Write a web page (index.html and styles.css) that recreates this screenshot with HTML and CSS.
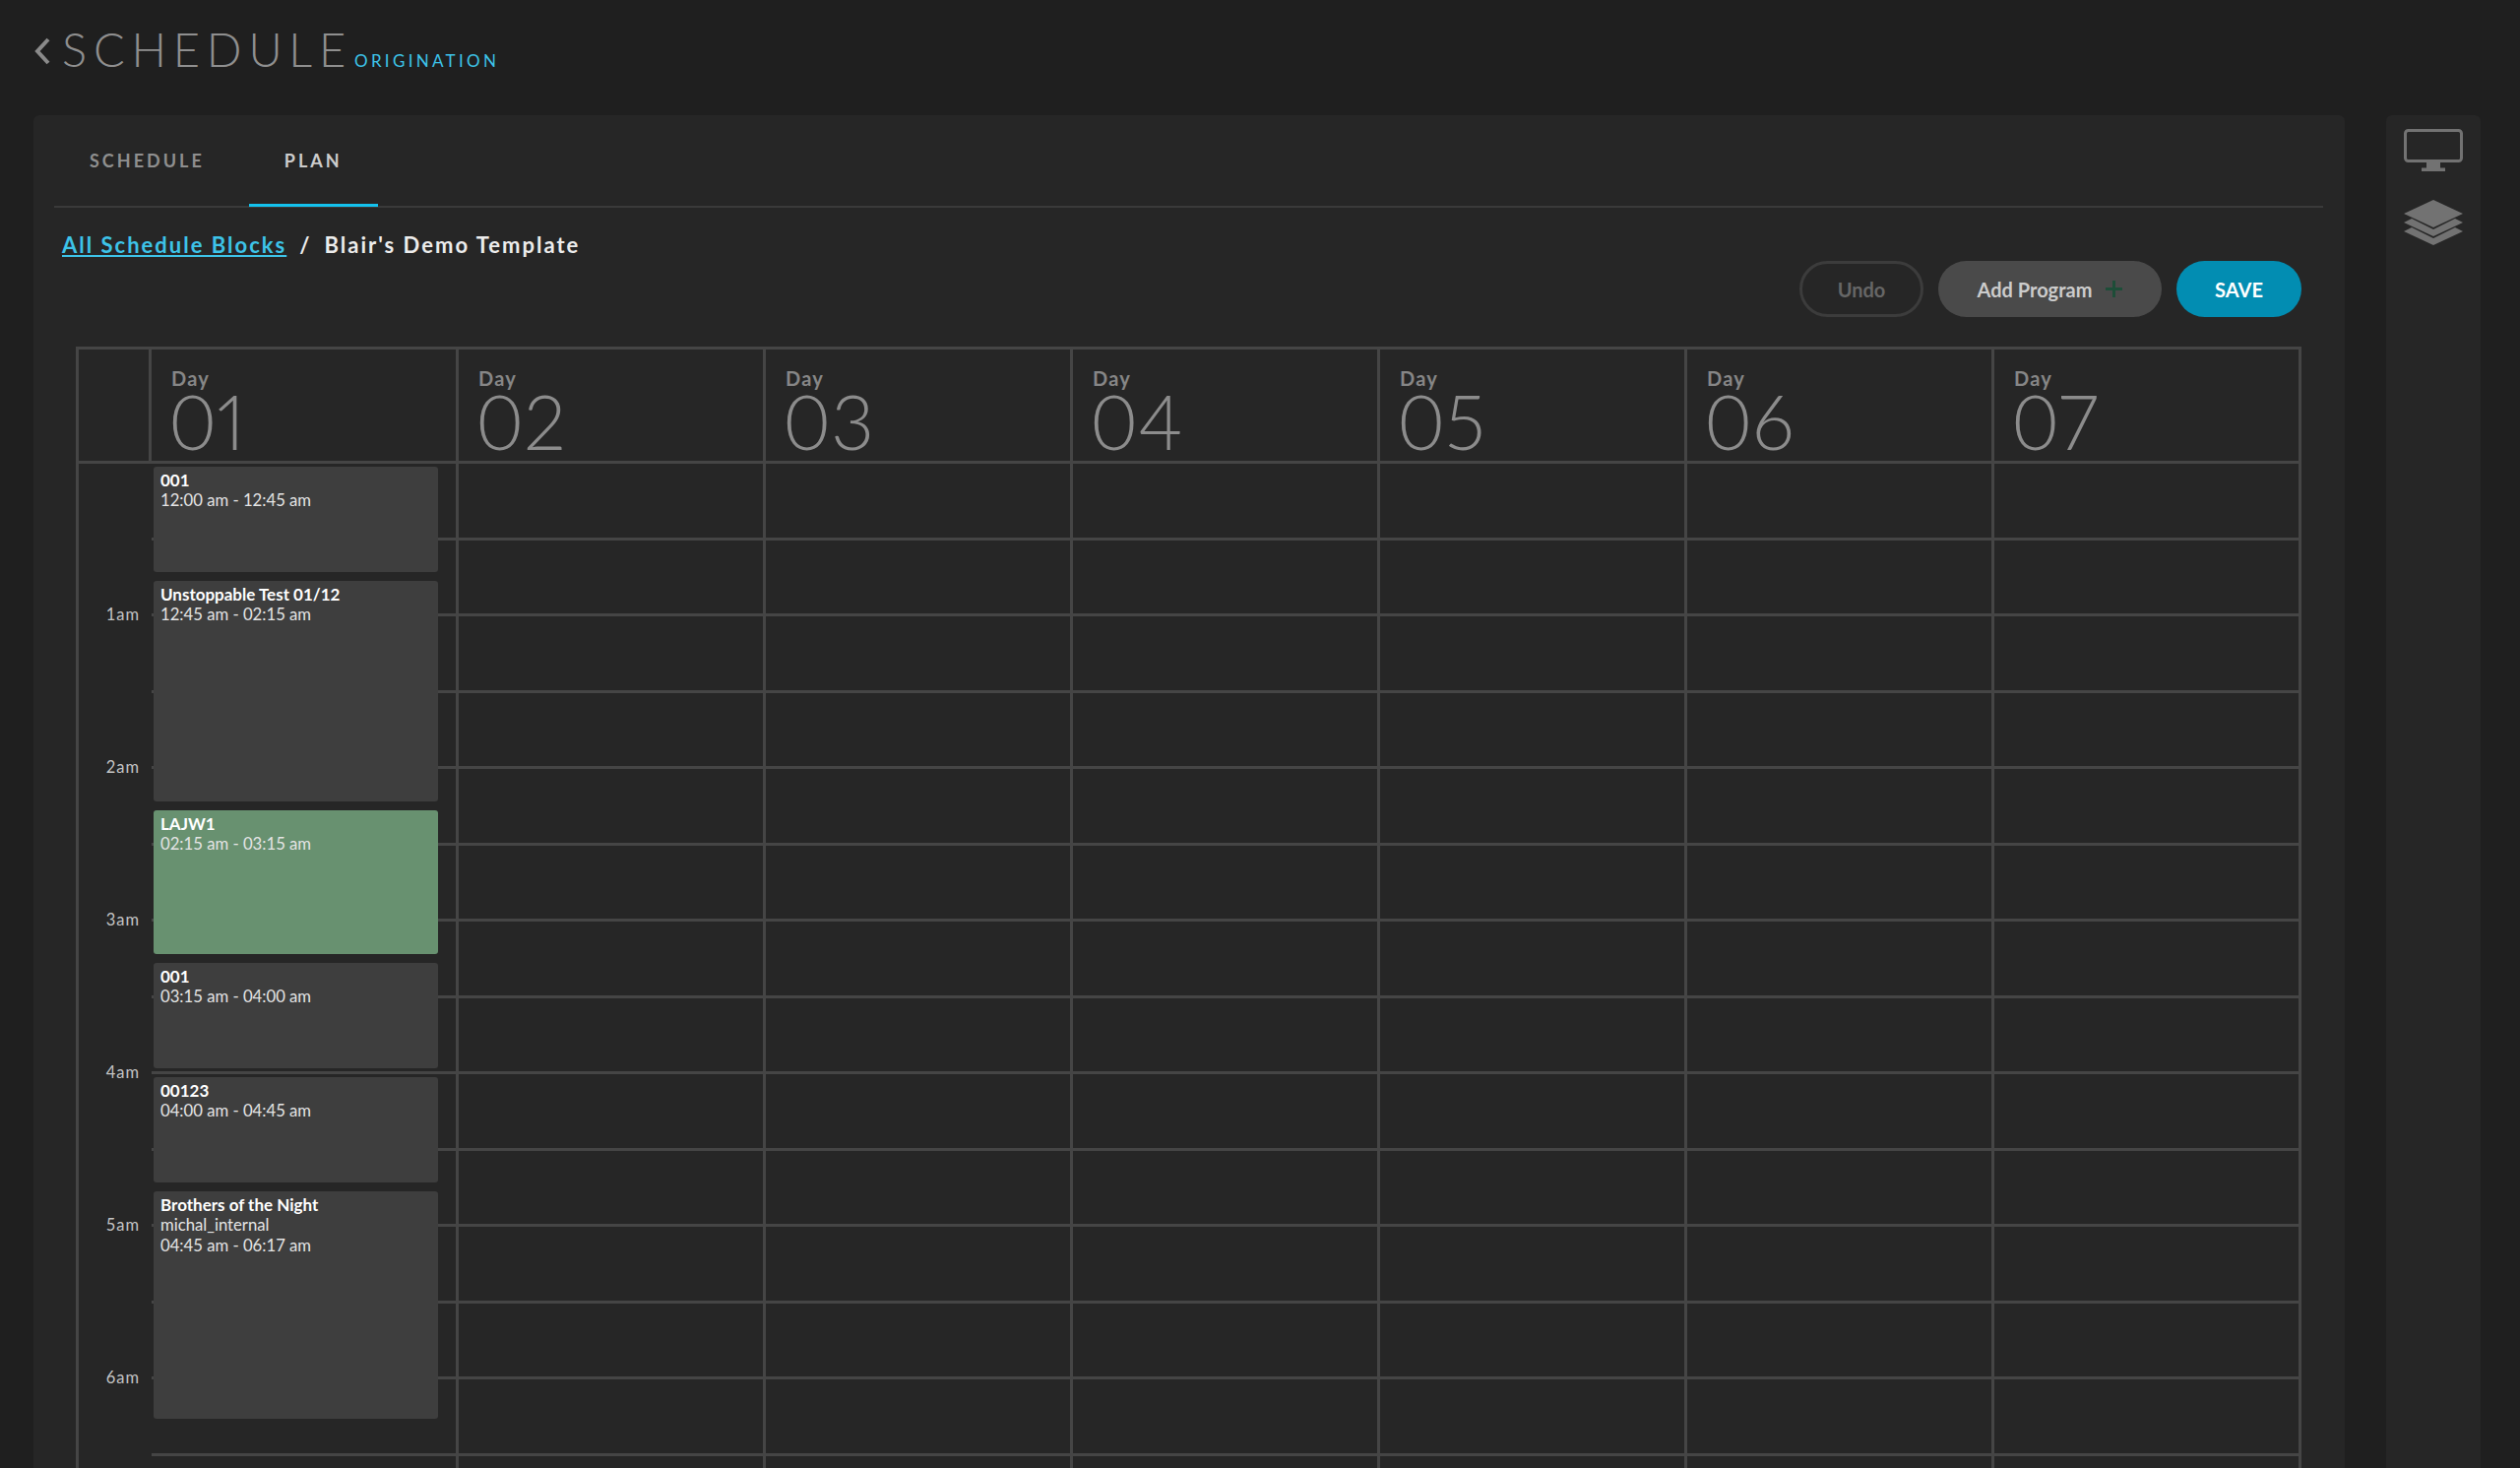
FILE: index.html
```html
<!DOCTYPE html>
<html lang="en">
<head>
    <meta charset="UTF-8">
    <meta name="viewport" content="width=device-width, initial-scale=1.0">
    <title>Schedule Origination</title>
    <link rel="stylesheet" href="styles.css">
</head>
<body>

<div class="page-header">
    <svg class="back-icon" width="18" height="28" viewBox="0 0 18 28"><polyline points="15,2 4,14 15,26" fill="none" stroke="#8a8a8a" stroke-width="4"/></svg>
    <span class="page-title">SCHEDULE</span>
    <span class="page-subtitle">ORIGINATION</span>
</div>

<div class="main">
    <div class="panel">
        <div class="tabs">
            <div class="tab">SCHEDULE</div>
            <div class="tab active">PLAN</div>
        </div>

        <div class="breadcrumb">
            <a class="crumb-link" href="#">All Schedule Blocks</a>
            <span class="crumb-sep">/</span>
            <span class="crumb-current">Blair's Demo Template</span>
        </div>

        <div class="toolbar">
            <button class="btn btn-undo">Undo</button>
            <button class="btn btn-add">Add Program <span class="plus"></span></button>
            <button class="btn btn-save">SAVE</button>
        </div>

        <div class="calendar">
            <div class="cal-head">
                <div class="head-spacer"></div>
                <div class="day-head"><span class="day-label">Day</span><span class="day-num">01</span></div>
                <div class="day-head"><span class="day-label">Day</span><span class="day-num">02</span></div>
                <div class="day-head"><span class="day-label">Day</span><span class="day-num">03</span></div>
                <div class="day-head"><span class="day-label">Day</span><span class="day-num">04</span></div>
                <div class="day-head"><span class="day-label">Day</span><span class="day-num">05</span></div>
                <div class="day-head"><span class="day-label">Day</span><span class="day-num">06</span></div>
                <div class="day-head"><span class="day-label">Day</span><span class="day-num">07</span></div>
            </div>
            <div class="cal-body">
                <div class="hours">
                    <div class="hour">1am</div>
                    <div class="hour">2am</div>
                    <div class="hour">3am</div>
                    <div class="hour">4am</div>
                    <div class="hour">5am</div>
                    <div class="hour">6am</div>
                </div>
                <div class="day-col">
                    <div class="slot"></div><div class="slot"></div><div class="slot"></div><div class="slot"></div><div class="slot"></div><div class="slot"></div><div class="slot"></div>
                    <div class="slot"></div><div class="slot"></div><div class="slot"></div><div class="slot"></div><div class="slot"></div><div class="slot"></div><div class="slot"></div>
                    <div class="events">
                        <div class="event h-45">
                            <strong>001</strong>
                            <span>12:00 am - 12:45 am</span>
                        </div>
                        <div class="event h-90">
                            <strong>Unstoppable Test 01/12</strong>
                            <span>12:45 am - 02:15 am</span>
                        </div>
                        <div class="event h-60 green">
                            <strong>LAJW1</strong>
                            <span>02:15 am - 03:15 am</span>
                        </div>
                        <div class="event h-45">
                            <strong>001</strong>
                            <span>03:15 am - 04:00 am</span>
                        </div>
                        <div class="event h-45">
                            <strong>00123</strong>
                            <span>04:00 am - 04:45 am</span>
                        </div>
                        <div class="event h-92">
                            <strong>Brothers of the Night</strong>
                            <span>michal_internal</span>
                            <span>04:45 am - 06:17 am</span>
                        </div>
                    </div>
                </div>
                <div class="day-col">
                    <div class="slot"></div><div class="slot"></div><div class="slot"></div><div class="slot"></div><div class="slot"></div><div class="slot"></div><div class="slot"></div>
                    <div class="slot"></div><div class="slot"></div><div class="slot"></div><div class="slot"></div><div class="slot"></div><div class="slot"></div><div class="slot"></div>
                </div>
                <div class="day-col">
                    <div class="slot"></div><div class="slot"></div><div class="slot"></div><div class="slot"></div><div class="slot"></div><div class="slot"></div><div class="slot"></div>
                    <div class="slot"></div><div class="slot"></div><div class="slot"></div><div class="slot"></div><div class="slot"></div><div class="slot"></div><div class="slot"></div>
                </div>
                <div class="day-col">
                    <div class="slot"></div><div class="slot"></div><div class="slot"></div><div class="slot"></div><div class="slot"></div><div class="slot"></div><div class="slot"></div>
                    <div class="slot"></div><div class="slot"></div><div class="slot"></div><div class="slot"></div><div class="slot"></div><div class="slot"></div><div class="slot"></div>
                </div>
                <div class="day-col">
                    <div class="slot"></div><div class="slot"></div><div class="slot"></div><div class="slot"></div><div class="slot"></div><div class="slot"></div><div class="slot"></div>
                    <div class="slot"></div><div class="slot"></div><div class="slot"></div><div class="slot"></div><div class="slot"></div><div class="slot"></div><div class="slot"></div>
                </div>
                <div class="day-col">
                    <div class="slot"></div><div class="slot"></div><div class="slot"></div><div class="slot"></div><div class="slot"></div><div class="slot"></div><div class="slot"></div>
                    <div class="slot"></div><div class="slot"></div><div class="slot"></div><div class="slot"></div><div class="slot"></div><div class="slot"></div><div class="slot"></div>
                </div>
                <div class="day-col">
                    <div class="slot"></div><div class="slot"></div><div class="slot"></div><div class="slot"></div><div class="slot"></div><div class="slot"></div><div class="slot"></div>
                    <div class="slot"></div><div class="slot"></div><div class="slot"></div><div class="slot"></div><div class="slot"></div><div class="slot"></div><div class="slot"></div>
                </div>
            </div>
        </div>
    </div>

    <div class="side">
        <svg class="side-icon" width="60" height="43" viewBox="0 0 60 43">
            <rect x="1.5" y="1.5" width="57" height="31" rx="3" fill="none" stroke="#727272" stroke-width="3"/>
            <rect x="23" y="33" width="14" height="7" fill="#727272"/>
            <rect x="18" y="39.5" width="24" height="3.5" fill="#727272"/>
        </svg>
        <svg class="side-icon" width="60" height="46" viewBox="0 0 60 46">
            <polygon points="30,0 60,14 30,28 0,14" fill="#727272"/>
            <polygon points="8,19 0,23 30,37 60,23 52,19 30,30" fill="#727272"/>
            <polygon points="8,28 0,32 30,46 60,32 52,28 30,39" fill="#727272"/>
        </svg>
    </div>
</div>

</body>
</html>
```

FILE: styles.css
```css
body {
    font-family: 'Lato', sans-serif;
    margin: 0;
    padding: 0;
    height: 1491px;
    overflow: hidden;
    background-color: #1f1f1f;
    color: #ffffff;
}
.page-header {
    display: flex;
    align-items: baseline;
    height: 117px;
    padding-left: 34px;
    box-sizing: border-box;
}
.back-icon {
    align-self: flex-start;
    margin-top: 38px;
}
.page-title {
    margin-left: 11px;
    padding-top: 24px;
    font-size: 47px;
    line-height: 52px;
    font-weight: 300;
    letter-spacing: 6.8px;
    color: #8f8f8f;
}
.page-subtitle {
    margin-left: 2px;
    font-size: 17px;
    letter-spacing: 3.3px;
    color: #3dc3e8;
}
.main {
    display: flex;
    gap: 42px;
    padding-left: 34px;
}
.panel {
    width: 2348px;
    height: 1374px;
    box-sizing: border-box;
    background-color: #262626;
    border-radius: 6px 6px 0 0;
}
.side {
    width: 96px;
    height: 1374px;
    background-color: #262626;
    border-radius: 6px 6px 0 0;
    display: flex;
    flex-direction: column;
    align-items: center;
    gap: 29px;
    padding-top: 14px;
    box-sizing: border-box;
}
.side-icon {
    display: block;
}
.tabs {
    display: flex;
    gap: 9px;
    height: 94px;
    margin: 0 22px 0 21px;
    border-bottom: 2px solid #3a3a3a;
    box-sizing: border-box;
}
.tab {
    padding: 35px 36px 0;
    height: 93px;
    box-sizing: border-box;
    font-size: 18px;
    font-weight: 700;
    letter-spacing: 3px;
    color: #8f8f8f;
}
.tab.active {
    color: #cccccc;
    border-bottom: 3px solid #14c2ee;
}
.breadcrumb {
    display: flex;
    gap: 13px;
    margin: 23px 0 0 29px;
    font-size: 22px;
    line-height: 30px;
    font-weight: 700;
    letter-spacing: 2px;
}
.crumb-link {
    color: #3dc3e8;
}
.crumb-current, .crumb-sep {
    color: #ececec;
}
.toolbar {
    display: flex;
    justify-content: flex-end;
    gap: 15px;
    margin: 1px 44px 0 0;
}
.btn {
    height: 57px;
    border-radius: 29px;
    border: none;
    font-family: inherit;
    font-size: 20px;
    font-weight: 700;
    padding: 0;
    display: flex;
    align-items: center;
    justify-content: center;
}
.btn-undo {
    width: 126px;
    background: none;
    border: 3px solid #3c3c3c;
    color: #666666;
}
.btn-add {
    width: 227px;
    gap: 14px;
    background-color: #4a4a4a;
    color: #cccccc;
}
.plus {
    position: relative;
    width: 17px;
    height: 17px;
}
.plus::before, .plus::after {
    content: "";
    position: absolute;
    background-color: #1d4d38;
}
.plus::before {
    left: 7px;
    top: 0;
    width: 3px;
    height: 17px;
}
.plus::after {
    left: 0;
    top: 7px;
    width: 17px;
    height: 3px;
}
.btn-save {
    width: 127px;
    background-color: #028db2;
    color: #ffffff;
}
.calendar {
    margin: 30px 0 0 43px;
    width: 2261px;
    box-sizing: border-box;
    border-top: 3px solid #454545;
    border-left: 3px solid #454545;
}
.cal-head {
    display: flex;
    height: 116px;
    box-sizing: border-box;
    border-bottom: 3px solid #454545;
}
.head-spacer {
    width: 71px;
    border-right: 3px solid #454545;
}
.day-head {
    width: 312px;
    box-sizing: border-box;
    border-right: 3px solid #454545;
    padding: 17px 0 0 20px;
    display: flex;
    flex-direction: column;
}
.day-label {
    font-size: 20px;
    line-height: 24px;
    font-weight: 700;
    letter-spacing: 1.2px;
    color: #868686;
}
.day-num {
    margin-left: -3px;
    font-size: 76px;
    line-height: 64px;
    font-weight: 300;
    font-variant-numeric: proportional-nums;
    color: #8c8c8c;
}
.cal-body {
    display: flex;
}
.hours {
    width: 74px;
    box-sizing: border-box;
    padding: 114px 12px 0 0;
}
.hour {
    height: 155px;
    line-height: 78px;
    text-align: right;
    font-size: 16.5px;
    letter-spacing: 1px;
    color: #c4c4c4;
}
.day-col {
    position: relative;
    width: 312px;
    box-sizing: border-box;
    border-right: 3px solid #454545;
}
.slot {
    height: 77.5px;
    box-sizing: border-box;
    border-bottom: 3px solid #454545;
}
/* sits over the slots, blocks stack in order */
.events {
    position: absolute;
    top: 3px;
    left: 2px;
    width: 289px;
    display: flex;
    flex-direction: column;
    gap: 9px;
}
.event {
    display: flex;
    flex-direction: column;
    box-sizing: border-box;
    padding: 3px 7px;
    background-color: #3e3e3e;
    border-radius: 3px;
    font-size: 16.7px;
    line-height: 21px;
    color: #e4e4e4;
}
.event strong {
    color: #ffffff;
    font-size: 17px;
    font-weight: 700;
}
.event.green {
    background-color: #689170;
}
.h-45 {
    height: 107px;
}
.h-60 {
    height: 146px;
}
.h-90 {
    height: 224px;
}
.h-92 {
    height: 231px;
}
```
